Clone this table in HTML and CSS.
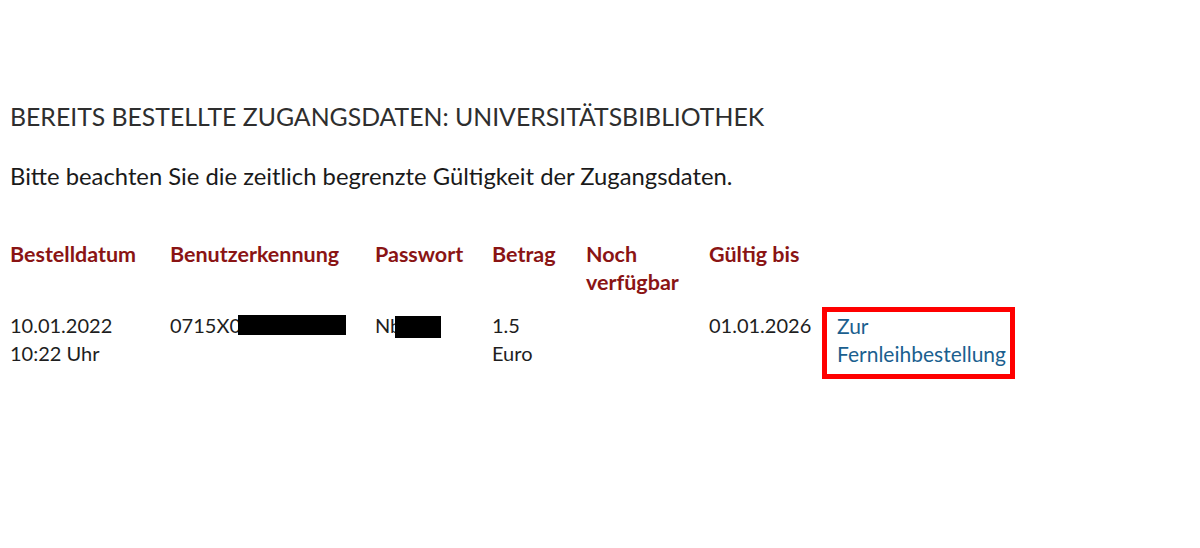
FILE: index.html
```html
<!DOCTYPE html>
<html lang="de">
<head>
<meta charset="utf-8">
<title>Zugangsdaten</title>
<link rel="stylesheet" href="styles.css">
</head>
<body>
<main class="page">
  <h2 class="title">BEREITS BESTELLTE ZUGANGSDATEN: UNIVERSITÄTSBIBLIOTHEK</h2>
  <p class="note">Bitte beachten Sie die zeitlich begrenzte Gültigkeit der Zugangsdaten.</p>
  <table class="orders">
    <thead>
      <tr>
        <th class="c-date">Bestelldatum</th>
        <th class="c-user">Benutzerkennung</th>
        <th class="c-pass">Passwort</th>
        <th class="c-amount">Betrag</th>
        <th class="c-avail">Noch verfügbar</th>
        <th class="c-valid">Gültig bis</th>
        <th class="c-link"></th>
      </tr>
    </thead>
    <tbody>
      <tr>
        <td>10.01.2022<br>10:22 Uhr</td>
        <td>0715X0<span class="redact redact-user"></span></td>
        <td>Nb<span class="redact redact-pass"></span></td>
        <td>1.5<br>Euro</td>
        <td></td>
        <td>01.01.2026</td>
        <td><div class="highlight"><a href="#" class="loan-link">Zur<br>Fernleihbestellung</a></div></td>
      </tr>
    </tbody>
  </table>
</main>
</body>
</html>
```

FILE: styles.css
```css
html, body {
  margin: 0;
  padding: 0;
  background: #ffffff;
}

body {
  font-family: Lato, "Liberation Sans", sans-serif;
  color: #1e1e1e;
}

.page {
  padding: 103px 0 0 10px;
}

.title {
  margin: 0;
  font-size: 24.8px;
  line-height: 28px;
  font-weight: 400;
  color: #2e2e2e;
}

.note {
  margin: 31px 0 0 0;
  font-size: 23.8px;
  line-height: 28px;
  color: #1a1a1a;
}

.orders {
  margin-top: 50px;
  border-collapse: collapse;
  table-layout: fixed;
  font-size: 20px;
  line-height: 28px;
}

.orders th {
  text-align: left;
  vertical-align: top;
  color: #8a1414;
  font-weight: 700;
  font-size: 21.5px;
  padding: 0 0 15px 0;
}

.orders td {
  text-align: left;
  vertical-align: top;
  padding: 0;
}

.c-date { width: 160px; }
.c-user { width: 205px; }
.c-pass { width: 117px; }
.c-amount { width: 94px; }
.c-avail { width: 123px; }
.c-valid { width: 113px; }
.c-link { width: 210px; }

.redact {
  display: inline-block;
  background: #000;
  vertical-align: top;
}

.redact-user {
  width: 108px;
  height: 20px;
  margin-top: 4px;
  margin-left: -3px;
}

.redact-pass {
  width: 46px;
  height: 22px;
  margin-top: 5px;
  margin-left: -6px;
}

.highlight {
  display: block;
  box-sizing: border-box;
  width: 193px;
  height: 72px;
  margin-top: -4px;
  padding: 0 0 0 10px;
  border: 5px solid #ff0000;
}

.loan-link {
  font-size: 21px;
  color: #1b5f8f;
  text-decoration: none;
}
```
